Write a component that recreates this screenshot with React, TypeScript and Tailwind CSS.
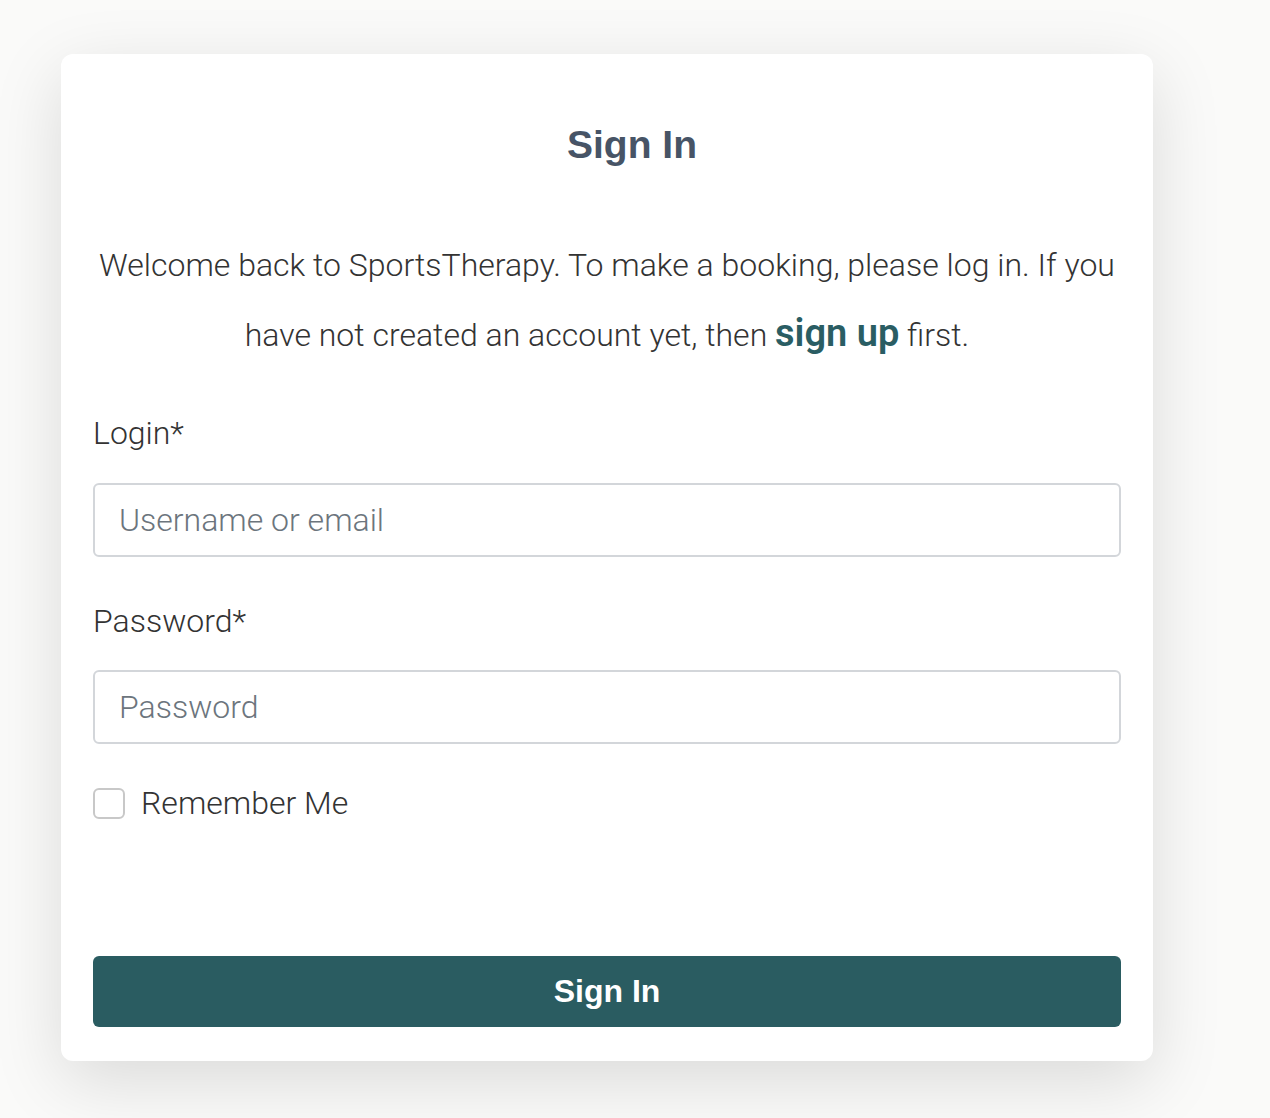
export default function App() {
  return (
    <div className="min-h-[1118px] w-full bg-[#fafaf9] pt-[54px] pl-[61px] font-['Roboto',sans-serif]">
      <div className="w-[1092px] rounded-[12px] bg-white px-[32px] pt-[68px] pb-[34px] shadow-[0_20px_70px_rgba(0,0,0,0.13)]">
        <h1 className="pl-[50px] text-center font-['Liberation_Sans',Arial,sans-serif] text-[39px] leading-[46px] font-bold text-[#475466]">
          Sign In
        </h1>

        <p className="mt-[62px] text-center text-[32px] leading-[70px] font-light text-[#333333]">
          Welcome back to SportsTherapy. To make a booking, please log in. If you have not created an
          account yet, then{' '}
          <a href="#" className="text-[38px] leading-none font-semibold text-[#2a5d63]">
            sign up
          </a>{' '}
          first.
        </p>

        <form className="mt-[45px] flex flex-col" onSubmit={(e) => e.preventDefault()}>
          <label htmlFor="login" className="text-[32px] leading-[36px] font-light text-[#333333]">
            Login*
          </label>
          <input
            id="login"
            type="text"
            placeholder="Username or email"
            className="mt-[32px] h-[74px] w-full rounded-[6px] border-2 border-[#d3d6da] px-[24px] text-[32px] font-light text-[#333333] outline-none placeholder:text-[#6c757d]"
          />

          <label htmlFor="password" className="mt-[46px] text-[32px] leading-[36px] font-light text-[#333333]">
            Password*
          </label>
          <input
            id="password"
            type="password"
            placeholder="Password"
            className="mt-[31px] h-[74px] w-full rounded-[6px] border-2 border-[#d3d6da] px-[24px] text-[32px] font-light text-[#333333] outline-none placeholder:text-[#6c757d]"
          />

          <label className="mt-[41px] flex items-center gap-[16px] text-[32px] leading-[36px] font-light text-[#333333]">
            <span className="h-[31px] w-[32px] rounded-[6px] border-2 border-[#c8c8c8] bg-white" />
            Remember Me
          </label>

          <button
            type="submit"
            className="mt-[135px] h-[71px] w-full rounded-[6px] bg-[#2a5c61] pb-[2px] font-['Liberation_Sans',Arial,sans-serif] text-[32px] font-bold text-white"
          >
            Sign In
          </button>
        </form>
      </div>
    </div>
  );
}
